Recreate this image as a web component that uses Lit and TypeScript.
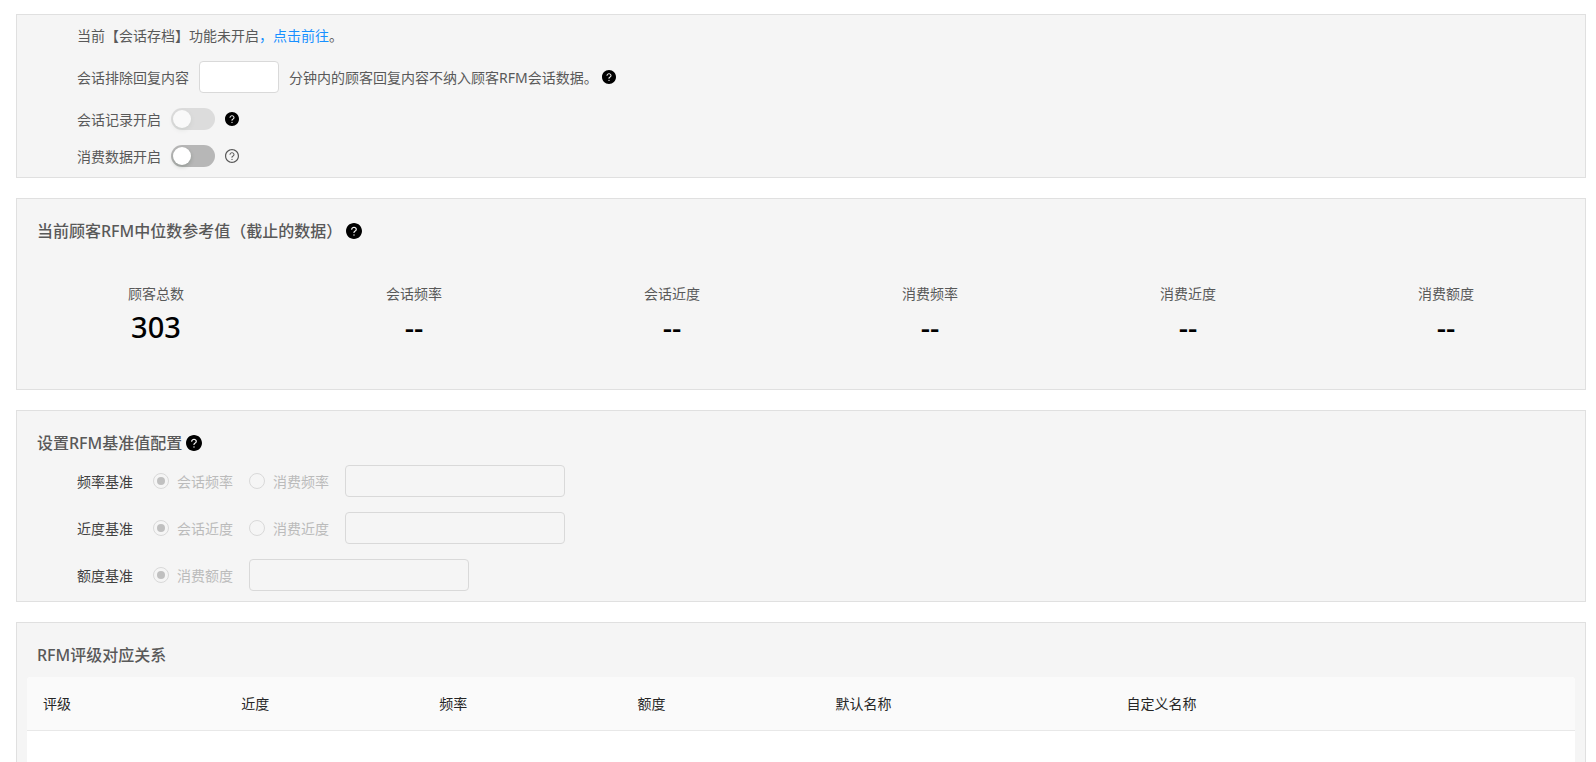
import { LitElement, html, css } from "lit";
import { customElement, property } from "lit/decorators.js";

@customElement("help-icon")
export class HelpIcon extends LitElement {
  @property({ type: Boolean }) outlined = false;

  static styles = css`
    :host {
      display: inline-flex;
      flex: none;
      width: 14px;
      height: 14px;
      color: #000;
    }
    :host([large]) {
      width: 16px;
      height: 16px;
    }
    :host([outlined]) {
      color: #595959;
    }
    svg {
      width: 100%;
      height: 100%;
      fill: currentColor;
    }
  `;

  render() {
    return this.outlined
      ? html`<svg viewBox="64 64 896 896" aria-hidden="true">
          <path
            d="M512 64C264.6 64 64 264.6 64 512s200.6 448 448 448 448-200.6 448-448S759.4 64 512 64zm0 820c-205.4 0-372-166.6-372-372s166.6-372 372-372 372 166.6 372 372-166.6 372-372 372z"
          />
          <path
            d="M623.6 316.7C593.6 290.4 554 276 512 276s-81.6 14.5-111.6 40.7C369.2 344 352 380.7 352 420v7.6c0 4.4 3.6 8 8 8h48c4.4 0 8-3.6 8-8V420c0-44.1 43.1-80 96-80s96 35.9 96 80c0 31.1-22 59.6-56.1 72.7-21.2 8.1-39.2 22.3-52.1 40.9-13.1 19-19.9 41.8-19.9 64.9V620c0 4.4 3.6 8 8 8h48c4.4 0 8-3.6 8-8v-22.7a48.3 48.3 0 0130.9-44.8c59-22.7 97.1-74.7 97.1-132.5.1-39.3-17.1-76-48.3-103.3zM472 732a40 40 0 1080 0 40 40 0 10-80 0z"
          />
        </svg>`
      : html`<svg viewBox="64 64 896 896" aria-hidden="true">
          <path
            d="M512 64C264.6 64 64 264.6 64 512s200.6 448 448 448 448-200.6 448-448S759.4 64 512 64zm0 708c-22.1 0-40-17.9-40-40s17.9-40 40-40 40 17.9 40 40-17.9 40-40 40zm62.9-219.5a48.3 48.3 0 00-30.9 44.8V620c0 4.4-3.6 8-8 8h-48c-4.4 0-8-3.6-8-8v-21.5c0-23.1 6.7-45.9 19.9-64.9 12.9-18.6 30.9-32.8 52.1-40.9 34-13.1 56-41.6 56-72.7 0-44.1-43.1-80-96-80s-96 35.9-96 80v7.6c0 4.4-3.6 8-8 8h-48c-4.4 0-8-3.6-8-8V420c0-39.3 17.2-76 48.4-103.3C430.4 290.4 470 276 512 276s81.6 14.5 111.6 40.7C654.8 344 672 380.7 672 420c0 57.8-38.1 109.8-97.1 132.5z"
          />
        </svg>`;
  }
}

interface Baseline {
  id: string;
  label: string;
  options: string[];
}

@customElement("app-root")
export class AppRoot extends LitElement {
  private stats = [
    ["顾客总数", "303"],
    ["会话频率", "--"],
    ["会话近度", "--"],
    ["消费频率", "--"],
    ["消费近度", "--"],
    ["消费额度", "--"],
  ];

  private baselines: Baseline[] = [
    { id: "frequency", label: "频率基准", options: ["会话频率", "消费频率"] },
    { id: "recency", label: "近度基准", options: ["会话近度", "消费近度"] },
    { id: "monetary", label: "额度基准", options: ["消费额度"] },
  ];

  private columns = ["评级", "近度", "频率", "额度", "默认名称", "自定义名称"];

  static styles = css`
    :host {
      display: block;
      box-sizing: border-box;
      height: 100vh;
      overflow: hidden;
      background: #fff;
      color: #595959;
      font: 14px/21px "Noto Sans", "Noto Sans CJK SC", sans-serif;
    }
    *,
    *::before {
      box-sizing: border-box;
    }
    main {
      display: flex;
      flex-direction: column;
      gap: 20px;
      padding: 14px 10px 14px 16px;
    }
    .panel {
      flex: none;
      padding: 20px 10px 10px;
      border: 1px solid #e0e0e0;
      background: #f5f5f5;
    }
    .switches {
      display: flex;
      flex-direction: column;
      gap: 15px;
      padding: 10px 60px;
    }
    p {
      margin: 0;
    }
    a {
      color: #1890ff;
      text-decoration: none;
    }
    .row {
      display: flex;
      align-items: center;
      gap: 10px;
    }
    .note {
      display: flex;
      align-items: center;
      gap: 4px;
    }
    .text {
      width: 220px;
      height: 32px;
      margin: 0;
      padding: 4px 11px;
      border: 1px solid #d9d9d9;
      border-radius: 4px;
      background: #fff;
      color: inherit;
      font: inherit;
    }
    .text:disabled {
      background: #f5f5f5;
    }
    .minutes {
      width: 80px;
    }
    .switch {
      appearance: none;
      width: 44px;
      height: 22px;
      margin: 0;
      padding: 2px;
      border-radius: 11px;
      background: rgba(0, 0, 0, 0.25);
    }
    .switch::before {
      content: "";
      display: block;
      width: 18px;
      height: 18px;
      border-radius: 9px;
      background: #fff;
      box-shadow: 0 2px 4px rgba(0, 35, 11, 0.2);
    }
    .switch:disabled {
      opacity: 0.4;
    }
    h2 {
      display: flex;
      align-items: center;
      gap: 4px;
      margin: 0 0 10px;
      padding-left: 10px;
      font-size: 16px;
      line-height: 24px;
      font-weight: 500;
    }
    .stats {
      display: grid;
      grid-template-columns: repeat(6, 1fr);
      margin: 0;
      padding: 30px 0;
      text-align: center;
    }
    dd {
      margin: 0;
      color: #000;
      font-size: 29px;
      line-height: 45px;
      font-weight: 500;
    }
    .baselines {
      display: flex;
      flex-direction: column;
      gap: 15px;
      padding-left: 50px;
    }
    fieldset {
      display: flex;
      align-items: center;
      gap: 16px;
      min-width: 0;
      margin: 0;
      padding: 0;
      border: 0;
    }
    .name {
      margin-right: 4px;
      color: #404040;
    }
    .option {
      display: flex;
      align-items: center;
      gap: 8px;
      color: #bbb;
    }
    .radio {
      appearance: none;
      display: grid;
      place-items: center;
      width: 16px;
      height: 16px;
      margin: 0;
      border: 1px solid #d9d9d9;
      border-radius: 8px;
      background: #f5f5f5;
    }
    .radio:checked::before {
      content: "";
      width: 8px;
      height: 8px;
      border-radius: 4px;
      background: #c0c0c0;
    }
    table {
      width: 100%;
      table-layout: fixed;
      border-collapse: separate;
      border-spacing: 0;
      border-radius: 4px 4px 0 0;
      background: #fff;
    }
    th {
      width: 12.8%;
      padding: 16px;
      border-bottom: 1px solid #e8e8e8;
      background: #fafafa;
      color: #262626;
      font-weight: 400;
      text-align: left;
    }
    th:first-child {
      border-top-left-radius: 4px;
    }
    th:nth-child(5) {
      width: 18.8%;
    }
    th:last-child {
      width: auto;
      border-top-right-radius: 4px;
    }
    .empty {
      height: 160px;
      padding: 16px;
    }
  `;

  render() {
    return html`<main>
      <section class="panel switches">
        <p>当前【会话存档】功能未开启<a href="#archive">，点击前往</a>。</p>
        <div class="row">
          <label for="minutes">会话排除回复内容</label>
          <input id="minutes" class="text minutes" type="text" />
          <span class="note"
            >分钟内的顾客回复内容不纳入顾客RFM会话数据。<help-icon></help-icon
          ></span>
        </div>
        <div class="row">
          <label for="chat">会话记录开启</label>
          <input id="chat" class="switch" type="checkbox" role="switch" disabled />
          <help-icon></help-icon>
        </div>
        <div class="row">
          <label for="spend">消费数据开启</label>
          <input id="spend" class="switch" type="checkbox" role="switch" />
          <help-icon outlined></help-icon>
        </div>
      </section>

      <section class="panel">
        <h2>当前顾客RFM中位数参考值（截止的数据）<help-icon large></help-icon></h2>
        <dl class="stats">
          ${this.stats.map(
            ([label, value]) => html`<div>
              <dt>${label}</dt>
              <dd>${value}</dd>
            </div>`
          )}
        </dl>
      </section>

      <section class="panel">
        <h2>设置RFM基准值配置<help-icon large></help-icon></h2>
        <div class="baselines">
          ${this.baselines.map(
            (b) => html`<fieldset aria-labelledby=${b.id}>
              <label class="name" id=${b.id} for="${b.id}-value">${b.label}</label>
              ${b.options.map(
                (option, i) => html`<label class="option">
                  <input
                    class="radio"
                    type="radio"
                    name=${b.id}
                    ?checked=${i === 0}
                    disabled
                  />${option}
                </label>`
              )}
              <input id="${b.id}-value" class="text" type="text" disabled />
            </fieldset>`
          )}
        </div>
      </section>

      <section class="panel">
        <h2>RFM评级对应关系</h2>
        <table>
          <thead>
            <tr>
              ${this.columns.map((c) => html`<th scope="col">${c}</th>`)}
            </tr>
          </thead>
          <tbody>
            <tr>
              <td class="empty" colspan="6"></td>
            </tr>
          </tbody>
        </table>
      </section>
    </main>`;
  }
}
